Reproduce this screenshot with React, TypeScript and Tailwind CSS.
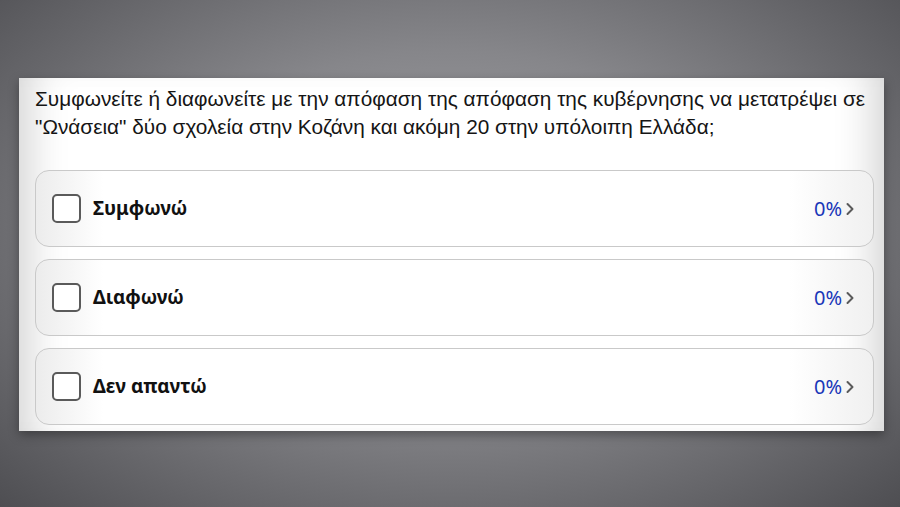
import React from "react";

const options = ["Συμφωνώ", "Διαφωνώ", "Δεν απαντώ"];

function Chevron() {
  return (
    <svg width="10" height="14" viewBox="0 0 10 14" fill="none" className="ml-[3px]">
      <path d="M2.5 2 L7.5 7 L2.5 12" stroke="#5a5a5a" strokeWidth="2" strokeLinecap="round" strokeLinejoin="round" />
    </svg>
  );
}

export default function App() {
  return (
    <div className="relative w-[900px] h-[507px] overflow-hidden bg-[radial-gradient(ellipse_at_50%_45%,#a4a4a8_0%,#86868a_45%,#4e4e52_100%)] flex flex-col">
      <div className="mt-[78px] ml-[19px] w-[865px] h-[353px] bg-white shadow-[0_4px_10px_rgba(0,0,0,0.35),inset_40px_0_40px_-30px_rgba(0,0,0,0.18),inset_-40px_0_40px_-30px_rgba(0,0,0,0.18)] flex flex-col">
        <p className="pt-[7px] pl-4 text-[20.8px] leading-[28px] text-[#151515] whitespace-nowrap font-['Liberation_Sans',Arial,sans-serif]">
          Συμφωνείτε ή διαφωνείτε με την απόφαση της απόφαση της κυβέρνησης να μετατρέψει σε
          <br />
          "Ωνάσεια" δύο σχολεία στην Κοζάνη και ακόμη 20 στην υπόλοιπη Ελλάδα;
        </p>
        <div className="mt-[29px] ml-4 mr-[10px] flex flex-col gap-3">
          {options.map((o) => (
            <div
              key={o}
              className="h-[77px] rounded-[14px] border border-[#c9c9c9] bg-[linear-gradient(90deg,#ececec_0%,#ffffff_8%,#ffffff_90%,#f0f0f0_100%)] flex items-center pl-4 pr-[18px]"
            >
              <div className="w-[29px] h-[29px] rounded-[5px] border-2 border-[#5a5a5a] bg-white shrink-0" />
              <span className="ml-[12px] text-[19px] font-bold text-[#111] font-['Noto_Sans',sans-serif]">{o}</span>
              <div className="ml-auto flex items-center">
                <span className="text-[20px] text-[#1a37b8] font-['Noto_Sans',sans-serif]">0%</span>
                <Chevron />
              </div>
            </div>
          ))}
        </div>
      </div>
    </div>
  );
}
